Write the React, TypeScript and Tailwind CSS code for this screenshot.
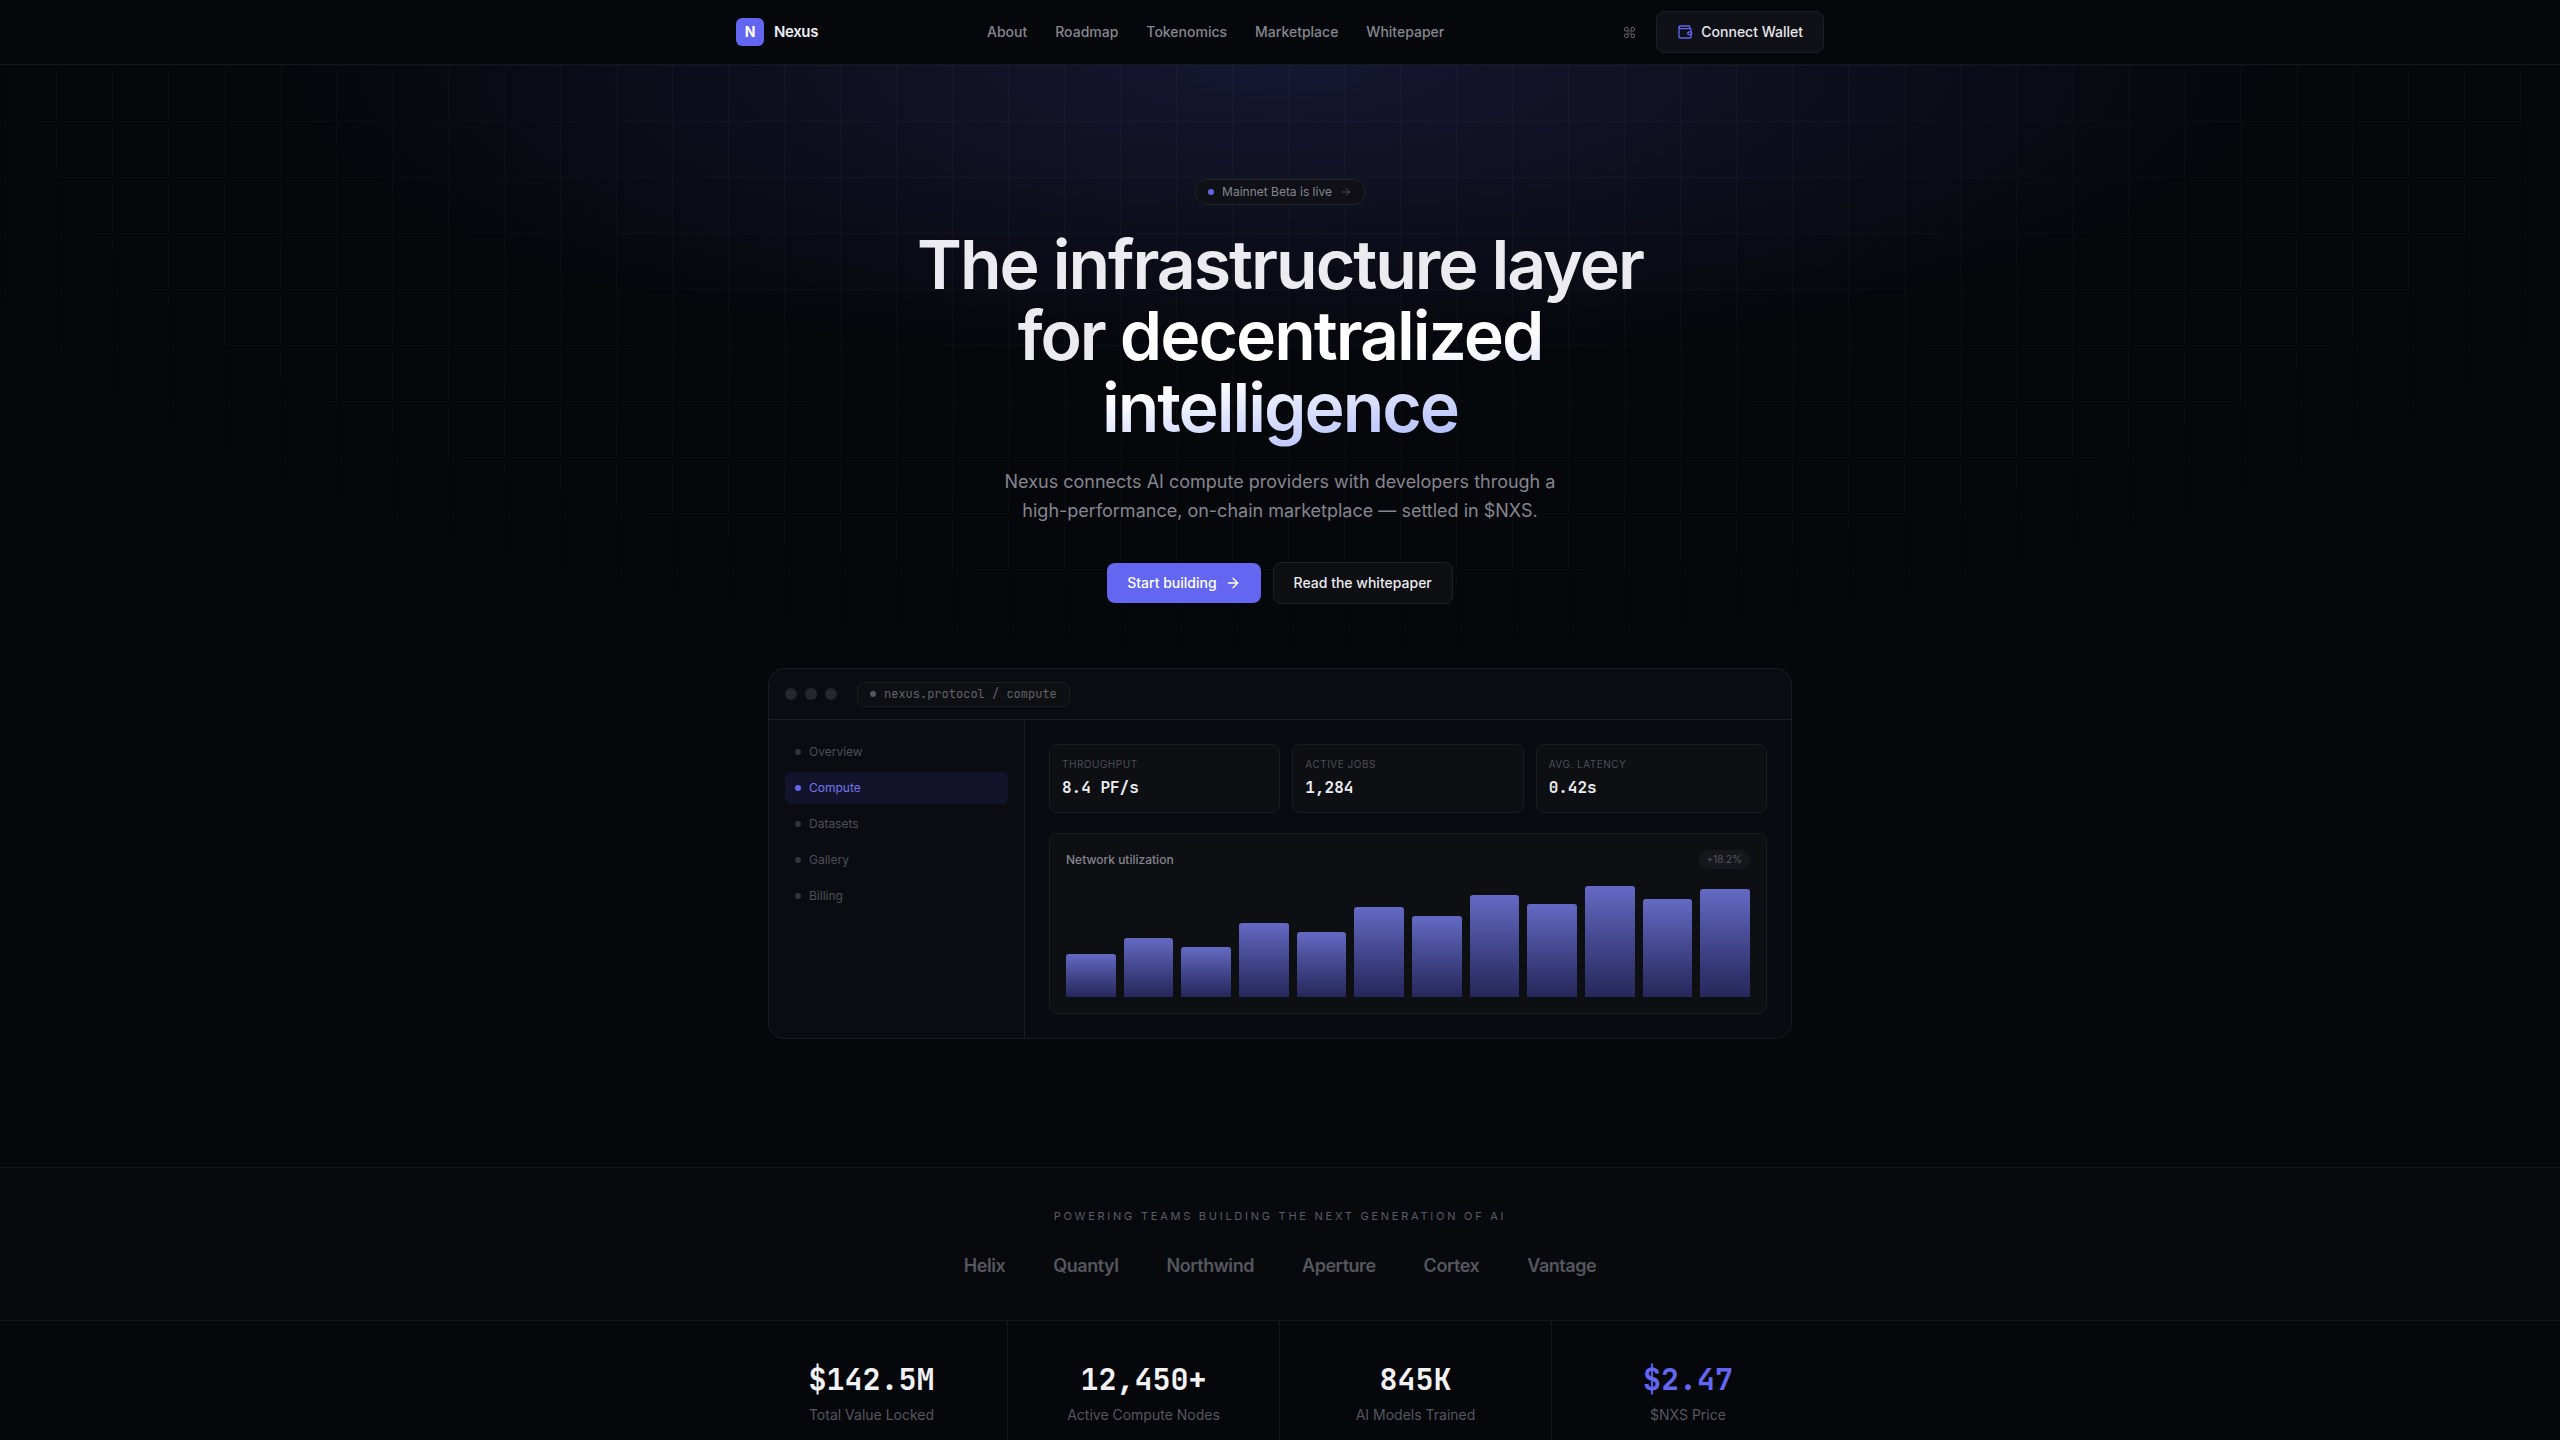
import { ArrowRight, Wallet } from 'lucide-react'

const MONO = "font-['JetBrains_Mono','DejaVu_Sans_Mono',monospace]"

const NAV_LINKS = ['About', 'Roadmap', 'Tokenomics', 'Marketplace', 'Whitepaper']
const SIDE_LINKS = ['Overview', 'Compute', 'Datasets', 'Gallery', 'Billing']
const LOGOS = ['Helix', 'Quantyl', 'Northwind', 'Aperture', 'Cortex', 'Vantage']
const BARS = [36, 49, 42, 62, 54, 75, 68, 85, 78, 93, 82, 90]

const CARDS = [
  { label: 'Throughput', value: '8.4 PF/s' },
  { label: 'Active Jobs', value: '1,284' },
  { label: 'Avg. Latency', value: '0.42s' },
]

const STATS = [
  { value: '$142.5M', label: 'Total Value Locked' },
  { value: '12,450+', label: 'Active Compute Nodes' },
  { value: '845K', label: 'AI Models Trained' },
  { value: '$2.47', label: '$NXS Price', accent: true },
]

function Nav() {
  return (
    <header className="relative z-10 h-[65px] border-b border-[#15161c] bg-[#06070b]">
      <div className="mx-auto flex h-16 w-[1088px] items-center">
        <div className="flex w-[251px] items-center gap-2.5">
          <div className="flex h-7 w-7 items-center justify-center rounded-md bg-[#6366f1] text-sm font-bold text-white">N</div>
          <span className="text-[15px] font-semibold tracking-tight text-[#ececf1]">Nexus</span>
        </div>
        <nav className="flex items-center gap-7">
          {NAV_LINKS.map((link) => (
            <a key={link} className="text-sm font-medium text-[#85868e]">
              {link}
            </a>
          ))}
        </nav>
        <div className="ml-auto flex items-center gap-[21px]">
          <svg viewBox="0 0 11 11" fill="none" stroke="#6f7078" strokeWidth="1" className="h-[11px] w-[11px]" aria-hidden>
            <rect x="0.5" y="0.5" width="3.5" height="3.5" rx="1.2" />
            <rect x="7" y="0.5" width="3.5" height="3.5" rx="1.2" />
            <rect x="0.5" y="7" width="3.5" height="3.5" rx="1.2" />
            <rect x="7" y="7" width="3.5" height="3.5" rx="1.2" />
            <path d="M4 4h3v3H4z" strokeOpacity="0.6" />
          </svg>
          <button className="flex h-[42px] items-center gap-2 rounded-lg border border-[#1f2027] bg-[#101116] px-5 text-sm font-medium text-[#e6e6eb]">
            <Wallet className="h-4 w-4 text-[#6366f1]" />
            Connect Wallet
          </button>
        </div>
      </div>
    </header>
  )
}

function Hero() {
  return (
    <div className="flex flex-col items-center">
      <div className="flex h-[26px] w-[171px] items-center justify-center gap-2 rounded-full border border-[#22232b] bg-[#101116] text-xs text-[#85858f]">
        <span className="h-1.5 w-1.5 rounded-full bg-[#6366f1]" />
        Mainnet Beta is live
        <ArrowRight className="h-3 w-3 text-[#4d4e56]" />
      </div>
      <h1 className="mt-6 text-center text-[68px] leading-[1.05] font-semibold tracking-[-0.03em] text-[#ebebf0]">
        The infrastructure layer
        <br />
        for{' '}
        <span className="bg-[linear-gradient(170deg,#ffffff_50%,#a5b4fc)] bg-clip-text text-transparent">
          decentralized
          <br />
          intelligence
        </span>
      </h1>
      <p className="mt-6 w-[560px] text-center text-lg leading-[29px] text-[#85858f]">
        Nexus connects AI compute providers with developers through a high-performance, on-chain marketplace — settled in $NXS.
      </p>
      <div className="mt-[37px] flex items-center gap-3">
        <button className="flex h-10 items-center gap-2 rounded-lg bg-[#6366f1] px-5 text-sm font-medium text-white">
          Start building
          <ArrowRight className="h-4 w-4" />
        </button>
        <button className="flex h-[42px] items-center rounded-lg border border-[#1f2027] bg-[#0e0f13] px-5 text-sm font-medium text-[#ececf1]">
          Read the whitepaper
        </button>
      </div>
    </div>
  )
}

function Preview() {
  return (
    <div className="mx-auto mt-16 w-[1024px] overflow-hidden rounded-2xl border border-[#1c1d24] bg-[#0b0c11]">
      <div className="flex h-[51px] items-center border-b border-[#1c1d24] px-4">
        <div className="flex gap-2">
          <span className="h-3 w-3 rounded-full bg-[#26272e]" />
          <span className="h-3 w-3 rounded-full bg-[#26272e]" />
          <span className="h-3 w-3 rounded-full bg-[#26272e]" />
        </div>
        <div className={`ml-5 flex h-[25px] items-center gap-2 rounded-md border border-[#1c1d24] bg-[#0e0f13] px-3 ${MONO} text-xs text-[#62636b]`}>
          <span className="h-1.5 w-1.5 rounded-full bg-[#55565e]" />
          nexus.protocol / compute
        </div>
      </div>
      <div className="flex">
        <aside className="flex w-[256px] flex-col gap-1 border-r border-[#1c1d24] p-4">
          {SIDE_LINKS.map((item) => (
            <div
              key={item}
              className={
                item === 'Compute'
                  ? 'flex h-8 items-center gap-2 rounded-md bg-[#13142b] px-2.5 text-xs text-[#7477f0]'
                  : 'flex h-8 items-center gap-2 rounded-md px-2.5 text-xs text-[#4d4e56]'
              }
            >
              <span className={item === 'Compute' ? 'h-1.5 w-1.5 rounded-full bg-[#6366f1]' : 'h-1.5 w-1.5 rounded-full bg-[#33343c]'} />
              {item}
            </div>
          ))}
        </aside>
        <div className="flex-1 bg-[#0a0b10] p-6">
          <div className="grid grid-cols-3 gap-3">
            {CARDS.map((card) => (
              <div key={card.label} className="h-[69px] rounded-lg border border-[#1c1d24] bg-[#0e0f13] px-3 pt-[11px]">
                <div className="text-[10px] leading-4 tracking-[0.05em] text-[#4d4e56] uppercase">{card.label}</div>
                <div className={`mt-1 ${MONO} text-base leading-6 font-semibold text-[#ececf1]`}>{card.value}</div>
              </div>
            ))}
          </div>
          <div className="mt-5 rounded-lg border border-[#1c1d24] bg-[#0e0f13] p-4">
            <div className="mb-2 flex h-[19px] items-center justify-between">
              <span className="text-xs font-medium text-[#85858f]">Network utilization</span>
              <span className="rounded-full bg-[#16171c] px-2 text-[10px] leading-[19px] text-[#55565e]">+18.2%</span>
            </div>
            <div className="flex h-[120px] items-end gap-2">
              {BARS.map((h, i) => (
                <div
                  key={i}
                  className="flex-1 rounded-t-[3px] bg-gradient-to-b from-[#646ac4] to-[#26275a]"
                  style={{ height: `${h}%` }}
                />
              ))}
            </div>
          </div>
        </div>
      </div>
    </div>
  )
}

export default function App() {
  return (
    <div className="h-[1440px] overflow-hidden bg-[#06070b] font-['Inter',sans-serif]">
      <Nav />
      <section className="relative h-[1102px] pt-[114px]">
        <div className="pointer-events-none absolute inset-x-0 top-0 h-[800px] bg-[linear-gradient(rgba(255,255,255,0.03)_1px,transparent_1px),linear-gradient(90deg,rgba(255,255,255,0.03)_1px,transparent_1px)] bg-[size:56px_56px] [mask-image:radial-gradient(ellipse_1800px_750px_at_50%_0,black_30%,transparent_100%)]" />
        <div className="pointer-events-none absolute inset-x-0 top-0 h-[400px] bg-[radial-gradient(ellipse_1000px_300px_at_50%_0,rgba(99,102,241,0.17),transparent)]" />
        <div className="relative">
          <Hero />
          <Preview />
        </div>
      </section>
      <section className="border-t border-[#14151a] bg-[#08090d] py-10">
        <p className="text-center text-[11px] leading-4 tracking-[0.25em] text-[#5a5b66] uppercase">Powering teams building the next generation of AI</p>
        <div className="mt-7 flex justify-center gap-12">
          {LOGOS.map((logo) => (
            <span key={logo} className="text-lg leading-7 font-semibold tracking-tight text-[#55565e]">
              {logo}
            </span>
          ))}
        </div>
      </section>
      <section className="border-t border-[#14151a]">
        <div className="mx-auto grid w-[1088px] grid-cols-4">
          {STATS.map((stat, i) => (
            <div key={stat.label} className={i < 3 ? 'border-r border-[#14151a] pt-10 pb-8 text-center' : 'pt-10 pb-8 text-center'}>
              <div className={`${MONO} text-3xl leading-9 font-bold ${stat.accent ? 'text-[#6366f1]' : 'text-[#f2f2f5]'}`}>{stat.value}</div>
              <div className="mt-2 text-sm leading-5 text-[#55565e]">{stat.label}</div>
            </div>
          ))}
        </div>
      </section>
    </div>
  )
}
